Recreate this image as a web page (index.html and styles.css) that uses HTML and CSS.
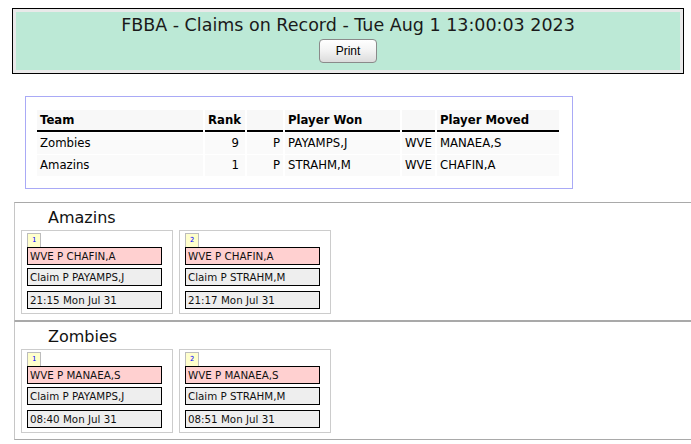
FILE: index.html
```html
<!DOCTYPE html>
<html>
<head>
<meta charset="utf-8">
<title>FBBA - Claims on Record</title>
<link rel="stylesheet" href="styles.css">
</head>
<body>
<div class="banner">
  <div class="banner-inner">
    <div class="title">FBBA - Claims on Record - Tue Aug 1 13:00:03 2023</div>
    <button class="print">Print</button>
  </div>
</div>

<div class="summary">
  <table class="claims">
    <thead>
      <tr>
        <th class="c-team">Team</th>
        <th class="c-rank">Rank</th>
        <th class="c-pos"></th>
        <th class="c-won">Player Won</th>
        <th class="c-pos2"></th>
        <th class="c-moved">Player Moved</th>
      </tr>
    </thead>
    <tbody>
      <tr>
        <td>Zombies</td>
        <td class="num">9</td>
        <td class="pos">P</td>
        <td>PAYAMPS,J</td>
        <td class="pos2">WVE</td>
        <td>MANAEA,S</td>
      </tr>
      <tr>
        <td>Amazins</td>
        <td class="num">1</td>
        <td class="pos">P</td>
        <td>STRAHM,M</td>
        <td class="pos2">WVE</td>
        <td>CHAFIN,A</td>
      </tr>
    </tbody>
  </table>
</div>

<section class="team">
  <h2 class="team-name">Amazins</h2>
  <div class="cards">
    <div class="card">
      <div class="badge">1</div>
      <div class="line drop">WVE P CHAFIN,A</div>
      <div class="line claim">Claim P PAYAMPS,J</div>
      <div class="line time">21:15 Mon Jul 31</div>
    </div>
    <div class="card">
      <div class="badge">2</div>
      <div class="line drop">WVE P CHAFIN,A</div>
      <div class="line claim">Claim P STRAHM,M</div>
      <div class="line time">21:17 Mon Jul 31</div>
    </div>
  </div>
</section>

<section class="team">
  <h2 class="team-name">Zombies</h2>
  <div class="cards">
    <div class="card">
      <div class="badge">1</div>
      <div class="line drop">WVE P MANAEA,S</div>
      <div class="line claim">Claim P PAYAMPS,J</div>
      <div class="line time">08:40 Mon Jul 31</div>
    </div>
    <div class="card">
      <div class="badge">2</div>
      <div class="line drop">WVE P MANAEA,S</div>
      <div class="line claim">Claim P STRAHM,M</div>
      <div class="line time">08:51 Mon Jul 31</div>
    </div>
  </div>
</section>
</body>
</html>
```

FILE: styles.css
```css
html, body {
  background: #ffffff;
}
body {
  margin: 8px 0 0 8px;
  font-family: "DejaVu Sans", Verdana, sans-serif;
  color: #111;
}

/* Banner */
.banner {
  margin: 0 7px 0 4px;
  border: 1px solid #000;
  background: #e9e9e9;
  padding: 3px;
}
.banner-inner {
  background: #bce9d6;
  padding: 3px 0 7px;
  text-align: center;
}
.title {
  font-size: 17.5px;
  line-height: 20px;
  color: #1a1a1a;
}
.print {
  display: block;
  margin: 4px auto 0;
  width: 58px;
  height: 24px;
  padding: 0;
  font-family: "Liberation Sans", Arial, sans-serif;
  font-size: 12px;
  color: #000;
  border: 1px solid #8a8a8a;
  border-radius: 4px;
  background: linear-gradient(#ffffff, #f4f4f4 45%, #dcdcdc);
}

/* Summary table */
.summary {
  margin: 22px 0 0 17px;
  width: 548px;
  box-sizing: border-box;
  border: 1px solid #a9aaf6;
  padding: 12px 11px 11px 9px;
}
.claims {
  border-collapse: separate;
  border-spacing: 2px 1px;
  table-layout: fixed;
  width: 526px;
  font-size: 11.7px;
  color: #000;
}
.claims th,
.claims td {
  box-sizing: border-box;
  padding: 0 3px;
  text-align: left;
  white-space: nowrap;
}
.claims th {
  background: #f8f8f8;
  font-weight: bold;
  height: 22px;
  line-height: 19px;
  padding-top: 1px;
  border-bottom: 2px solid #000;
}
.claims td {
  background: #fafafa;
  height: 21px;
  line-height: 21px;
}
.c-team { width: 166px; }
.c-rank { width: 40px; }
.c-pos { width: 36px; }
.c-won { width: 115px; }
.c-pos2 { width: 33px; }
.c-moved { width: 122px; }
.claims td.num {
  text-align: right;
  padding-right: 6px;
}
.claims td.pos {
  text-align: right;
  padding-right: 3px;
}
.claims td.pos2 {
  text-align: right;
  padding-right: 4px;
}

/* Team sections */
.team {
  margin: 13px 0 0 6px;
  border-top: 1px solid #a9a9a9;
  border-bottom: 1px solid #a9a9a9;
  border-left: 1px solid #c6c6c6;
}
.team + .team {
  margin-top: 0;
}
.team-name {
  margin: 5px 0 3px 33px;
  font-size: 16px;
  line-height: 19px;
  font-weight: normal;
  color: #111;
}
.cards {
  display: flex;
  gap: 6px;
  margin: 0 0 6px 6px;
}
.card {
  width: 152px;
  box-sizing: border-box;
  border: 1px solid #cccccc;
  padding: 2px 10px 4px 5px;
}
.badge {
  width: 14px;
  height: 14px;
  box-sizing: border-box;
  border: 1px solid #bdbdbd;
  border-bottom: none;
  background: #ffffcc;
  color: #0000ff;
  font-family: "DejaVu Sans Mono", monospace;
  font-size: 7px;
  line-height: 13px;
  text-align: center;
}
.line {
  height: 18px;
  box-sizing: border-box;
  border: 1px solid #000;
  padding: 0 2px;
  font-size: 10.3px;
  line-height: 16px;
  color: #111;
  white-space: nowrap;
}
.drop {
  background: #ffd0d0;
}
.claim {
  background: #eeeeee;
  margin-top: 3px;
}
.time {
  background: #eeeeee;
  margin-top: 5px;
}
```
